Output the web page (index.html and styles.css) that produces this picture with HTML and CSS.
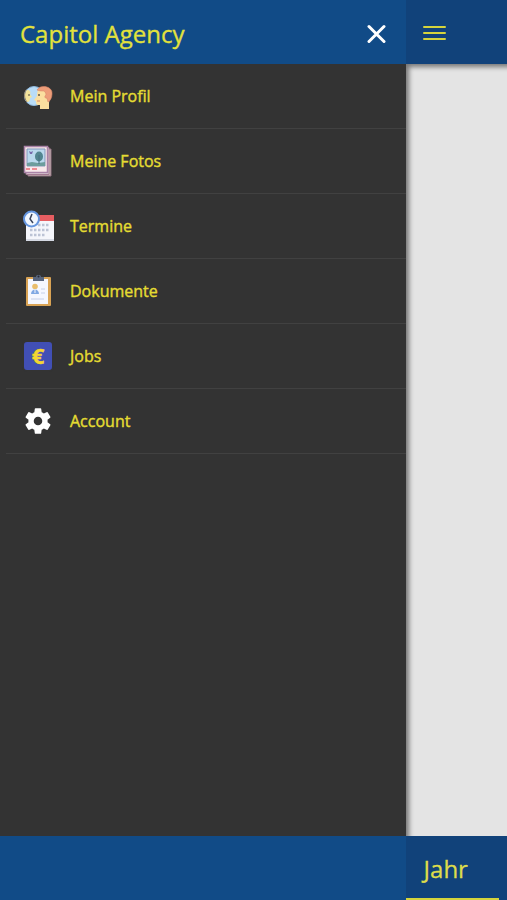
FILE: index.html
```html
<!DOCTYPE html>
<html lang="de">
<head>
<meta charset="utf-8">
<meta name="viewport" content="width=device-width, initial-scale=1">
<title>Capitol Agency</title>
<link rel="stylesheet" href="styles.css">
</head>
<body>
<div class="app">
  <aside class="drawer">
    <header class="drawer-header">
      <h1 class="title">Capitol Agency</h1>
      <button class="icon-button close" type="button" aria-label="Menü schließen">
        <svg width="20" height="20" viewBox="0 0 20 20"><path d="M3 2.500l15 15M18 2.500l-15 15" stroke="#fff" stroke-width="3" stroke-linecap="round"/></svg>
      </button>
    </header>
    <nav class="menu">
      <a class="item" href="#profil">
        <svg class="icon" viewBox="0 0 32 32">
          <circle cx="12" cy="16" r="9.500" fill="#b9dcf7" stroke="#8fb9df"/>
          <path d="M5 10c3 0 4 2 3 4l2 3-2 1c0 3-1 4-3 4-3-4-3-8 0-12z" fill="#f3e39b"/>
          <path d="M4 10c-2 4-2 8 1 12" fill="none" stroke="#9a8669"/>
          <path d="M17 9c5-3 12-1 12 6 0 4-2 5-2 9v5h-9v-4h-2c-2 0-2-2-2-4l-2-1 3-4c0-2 0-5 2-7z" fill="#fbdf9f"/>
          <path d="M15 10c3-6 16-4 15 4 0 4-2 7-4 8l-1-4c-2 1-3-2-1-3 0-2-1-3-2-4-2 0-5 0-7-1z" fill="#ed9d79" stroke="#d88769" stroke-width=".6"/>
          <circle cx="17" cy="15" r="1" fill="#655744"/><circle cx="7" cy="15" r="1" fill="#83795b"/>
          <path d="M15 21h3" stroke="#d9846a"/>
        </svg>
        <span>Mein Profil</span>
      </a>
      <a class="item" href="#fotos">
        <svg class="icon" viewBox="0 0 32 32">
          <path d="M6 4h23v27H6z" fill="#cdbbb9" stroke="#907080"/>
          <path d="M4 2.500h23v27H4z" fill="#dac8d0" stroke="#a27891"/>
          <path d="M2.500 1.500h23v26h-23z" fill="#f8e8ea" stroke="#a982a6" stroke-width="1.500"/>
          <path d="M5 4h18v17H5z" fill="#b9d9ed" stroke="#8197bb"/>
          <path d="M5 18l5-1 6 1 7-1v4H5z" fill="#6c9d9d"/>
          <ellipse cx="17" cy="11.500" rx="4" ry="5" fill="#51858f"/>
          <path d="M17 10v9" stroke="#477080"/><path d="M7 6l2 1 2-1-1 3H8z" fill="#776bab"/>
          <path d="M4 24h4m2 0h5" stroke="#e96d78" stroke-width="1.500"/>
        </svg>
        <span>Meine Fotos</span>
      </a>
      <a class="item" href="#termine">
        <svg class="icon" viewBox="0 0 32 32">
          <path d="M4 5h28v26H4z" fill="#f5f6fb"/>
          <path d="M4 5h28v6H4z" fill="#e65d61"/><path d="M4 29h28v2H4z" fill="#d5d9e3"/>
          <path d="M16 15h12M8 20h20M8 25h16" stroke="#bcc3d5" stroke-width="2.500" stroke-dasharray="2.500 1.500"/>
          <circle cx="9.500" cy="9" r="7.500" fill="#f1f7ff" stroke="#6495df" stroke-width="2"/>
          <path d="M10 4L8 9l3 4" fill="none" stroke="#39435c" stroke-width="1.500"/>
        </svg>
        <span>Termine</span>
      </a>
      <a class="item" href="#dokumente">
        <svg class="icon" viewBox="0 0 32 32">
          <rect x="4" y="2" width="25" height="29" rx="1" fill="#d9a354"/>
          <path d="M6 4h20v25H6z" fill="#f5f7fe"/>
          <path d="M11 2h3c0-3 5-3 5 0h3v4H11z" fill="#58657d"/><circle cx="16.500" cy="1.500" r="1" fill="#252b36"/>
          <circle cx="13" cy="11.500" r="2.800" fill="#e9bd6b"/>
          <path d="M9 19c0-6 8-6 8 0z" fill="#81a9e3"/><path d="M13 14v4" stroke="#f5f7fe"/>
          <path d="M19 14h4m-4 4h4M9 24h13" stroke="#c6d0e8"/>
        </svg>
        <span>Dokumente</span>
      </a>
      <a class="item" href="#jobs">
        <span class="icon euro" aria-hidden="true">€</span>
        <span>Jobs</span>
      </a>
      <a class="item" href="#account">
        <svg class="icon" viewBox="0 0 24 24"><path fill="#fff" d="M19.140 12.940c.04-.3.060-.61.060-.94s-.02-.64-.07-.94l2.030-1.580a.49.49 0 0 0 .12-.61l-1.920-3.320a.49.49 0 0 0-.59-.22l-2.390.96c-.5-.38-1.030-.7-1.620-.94l-.36-2.540a.48.48 0 0 0-.48-.41h-3.840c-.24 0-.43.17-.47.41l-.36 2.540c-.59.24-1.130.57-1.620.94l-2.390-.96a.48.48 0 0 0-.59.22L2.740 8.870c-.12.21-.08.47.12.61l2.030 1.580c-.05.3-.09.63-.09.94s.02.64.07.94l-2.030 1.580a.49.49 0 0 0-.12.610l1.920 3.320c.12.22.37.29.59.22l2.390-.96c.5.38 1.030.7 1.620.94l.36 2.540c.05.24.24.41.48.41h3.840c.24 0 .44-.17.47-.41l.36-2.540c.59-.24 1.130-.56 1.620-.94l2.390.96c.22.08.47 0 .59-.22l1.920-3.320a.48.48 0 0 0-.12-.610zM12 15.200a3.200 3.200 0 1 1 0-6.400 3.200 3.200 0 0 1 0 6.400z"/></svg>
        <span>Account</span>
      </a>
    </nav>
    <div class="drawer-footer"></div>
  </aside>
  <div class="page">
    <header class="page-header">
      <button class="icon-button" type="button" aria-label="Menü">
        <svg width="24" height="16" viewBox="0 0 24 16"><path d="M2 2h21M2 8h21M2 14h21" stroke="#d5d43c" stroke-width="2" stroke-linecap="round"/></svg>
      </button>
    </header>
    <main class="content"></main>
    <footer class="page-footer"><a class="tab" href="#jahr">Jahr</a></footer>
  </div>
</div>
</body>
</html>
```
FILE: styles.css
```css
* {
  box-sizing: border-box;
}

body {
  margin: 0;
  font-family: "Open Sans", "Noto Sans", sans-serif;
  color: #e5dc32;
}

.app {
  display: grid;
  grid-template-columns: 4fr 1fr;
  min-height: 100vh;
}

.drawer,
.page {
  display: grid;
  grid-template-rows: 64px 1fr 64px;
  min-width: 0;
}

.drawer {
  background: #333;
}

.drawer-header {
  display: flex;
  align-items: center;
  justify-content: space-between;
  padding: 4px 16px 0 20px;
  background: #114b87;
}

.title {
  margin: 0;
  font-size: 24px;
  font-weight: 400;
  line-height: 32px;
  color: #e2e23c;
  -webkit-text-stroke: 0.3px;
}

.icon-button {
  display: flex;
  padding: 4px;
  border: 0;
  background: none;
  cursor: pointer;
}

.menu {
  padding-left: 6px;
}

.item {
  display: flex;
  align-items: center;
  gap: 16px;
  height: 65px;
  padding-left: 16px;
  border-bottom: 1px solid #414141;
  font-size: 16px;
  color: inherit;
  text-decoration: none;
  -webkit-text-stroke: 0.4px;
}

.icon {
  flex: none;
  width: 32px;
  height: 32px;
}

.euro {
  border: 2px solid #333;
  border-radius: 5px;
  background: #414fb5;
  font-size: 22px;
  font-weight: 700;
  line-height: 27px;
  text-align: center;
  color: #f3d631;
}

.drawer-footer {
  background: #114b87;
}

.page-header {
  display: flex;
  align-items: center;
  padding: 2px 12px 0;
  background: #11427a;
}

.content {
  background: #e4e4e4;
  box-shadow: inset 5px 5px 5px -2px #777;
}

.page-footer {
  display: flex;
  padding-right: 8px;
  background: #11427a;
}

.tab {
  flex: 1;
  padding: 0 18px;
  border-bottom: 2px solid #d5d43c;
  font-size: 24px;
  line-height: 66px;
  color: #dddc4b;
  text-decoration: none;
  -webkit-text-stroke: 0.3px;
}
```
